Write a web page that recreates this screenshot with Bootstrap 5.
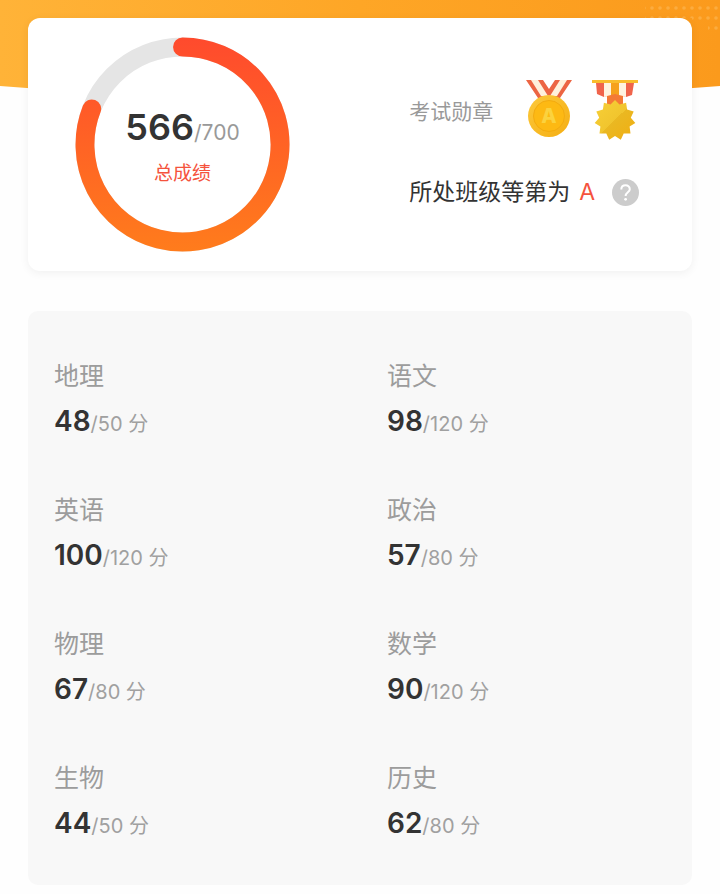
<!DOCTYPE html>
<html lang="zh-CN">
<head>
<meta charset="utf-8">
<meta name="viewport" content="width=device-width, initial-scale=1">
<title>考试成绩</title>
<link href="https://cdn.jsdelivr.net/npm/bootstrap@5.3.0/dist/css/bootstrap.min.css" rel="stylesheet">
<style>
body { font-family: Inter, "Noto Sans CJK SC", sans-serif; background: #fefefe; color: #333; }
.hero-bg { height: 96px; z-index: -1; }
.page-wrap { padding: 18px 28px 9px; }
.summary { border-radius: 12px; padding: 19px 0; display: grid; grid-template-columns: 31fr 23fr; box-shadow: 0 2px 10px rgba(0,0,0,.06); }
.ring-box { width: 215px; margin-left: 47px; display: grid; }
.ring-box > * { grid-area: 1 / 1; }
.total-num { font-size: 36px; line-height: 50px; font-weight: 600; }
.total-max { font-size: 21px; color: #999; }
.total-label { font-size: 19px; line-height: 28px; color: #f5533d; margin-top: 2px; }
.info-col { padding-top: 43px; }
.medal-label { font-size: 21px; line-height: 32px; color: #999; }
.medal-row { height: 64px; }
.medal-list { gap: 20px; margin-left: 33px; }
.grade-row { font-size: 23px; line-height: 36px; margin-top: 30px; }
.grade-mark { color: #f5533d; margin: 0 17px 0 9px; }
.help-btn { width: 27px; height: 27px; }
.subjects { background: #f8f8f8; border-radius: 10px; margin-top: 40px; padding: 47px 26px 41px; row-gap: 50px; display: grid; grid-template-columns: 333fr 279fr; }
.subj-name { font-size: 25px; line-height: 36px; font-weight: 400; color: #9c9c9c; }
.subj-score { font-size: 28px; line-height: 36px; margin-top: 9px; }
.subj-max { font-size: 20px; color: #a0a0a0; }
</style>
<script src="https://cdn.jsdelivr.net/npm/bootstrap@5.3.0/dist/js/bootstrap.bundle.min.js"></script>
</head>
<body>
<div class="position-relative">
<svg class="hero-bg position-absolute top-0 start-0 w-100" viewBox="0 0 720 96" preserveAspectRatio="none" aria-hidden="true">
  <defs>
    <linearGradient id="heroFill" x1="0" y1="0" x2="1" y2="0"><stop offset="0" stop-color="#ffb338"/><stop offset=".5" stop-color="#fea626"/><stop offset="1" stop-color="#fb9a1c"/></linearGradient>
    <pattern id="dots" width="8" height="10" patternUnits="userSpaceOnUse"><circle cx="4" cy="8" r="1.800" fill="#fdb755" fill-opacity=".6"/></pattern>
  </defs>
  <path d="M0 0H720V86Q360 116 0 86Z" fill="url(#heroFill)"/>
  <path d="M645 5H720V32H708V25H692V18H645Z" fill="url(#dots)"/>
</svg>
<main class="page-wrap">
  <section class="summary bg-white">
    <div class="ring-box">
      <svg viewBox="0 0 216 216" class="w-100" aria-hidden="true">
        <defs><linearGradient id="ringFill" gradientUnits="userSpaceOnUse" x1="0" y1="0" x2="0" y2="216"><stop offset="0" stop-color="#ff4a2d"/><stop offset="1" stop-color="#ff7c1c"/></linearGradient></defs>
        <circle cx="108" cy="108" r="98" fill="none" stroke="#e5e5e5" stroke-width="19"/>
        <path d="M108 10A98 98 0 1 1 16.800 72.200" fill="none" stroke="url(#ringFill)" stroke-width="19" stroke-linecap="round"/>
      </svg>
      <div class="d-flex flex-column align-items-center justify-content-center">
        <div class="total-num">566<span class="total-max fw-normal">/700</span></div>
        <div class="total-label">总成绩</div>
      </div>
    </div>
    <div class="info-col">
      <div class="medal-row d-flex align-items-start">
        <div class="medal-label mt-3">考试勋章</div>
        <div class="medal-list d-flex">
        <svg width="46" height="60" viewBox="0 0 46 60" role="img" aria-label="A 级奖牌">
          <defs><linearGradient id="coin" x1="0" y1="0" x2="1" y2="1"><stop offset="0" stop-color="#fcc93c"/><stop offset="1" stop-color="#f5ae12"/></linearGradient></defs>
          <path d="M0 0H17L23 9L29 0H46L34 18H12Z" fill="#ec6543"/>
          <path d="M5 0H12L22 16H15ZM41 0H34L24 16H31Z" fill="#fff1dc"/>
          <circle cx="23" cy="36" r="21" fill="url(#coin)"/><circle cx="23" cy="36" r="15.500" fill="#fdb913" stroke="#f3ab10"/>
          <text x="23" y="43" text-anchor="middle" font-size="20" font-weight="800" fill="#fbd23e">A</text>
        </svg>
        <svg width="46" height="60" viewBox="0 0 46 60" role="img" aria-label="星形奖章">
          <defs><linearGradient id="star" x1="0" y1="0" x2="1" y2="1"><stop offset="0" stop-color="#f7d038"/><stop offset=".5" stop-color="#f1c52e"/><stop offset=".5" stop-color="#eab822"/><stop offset="1" stop-color="#f0ae12"/></linearGradient></defs>
          <path d="M4 3H42L40 15L34 17L23 14L12 17L5 14Z" fill="#f0644b"/><path d="M12 3H19V16L12 17ZM27 3H34V17L27 16Z" fill="#fff3df"/><path d="M19 3H27V17H19Z" fill="#f6a11c"/>
          <path d="M15 16L23 14L31 16V28H15Z" fill="#f47a35"/><path d="M0 0H46V3H0Z" fill="#f9bd2c"/>
          <path d="M23 20L27.500 24.600L34.100 22.800L35.100 29.500L41.700 31.500L38.800 37.700L43.300 42.900L37.600 46.600L38.500 53.400L31.700 53.500L28.800 59.700L23 56L17.200 59.700L14.300 53.500L7.500 53.400L8.400 46.600L2.700 42.900L7.200 37.700L4.300 31.500L10.900 29.500L11.900 22.800L18.500 24.600Z" fill="url(#star)"/>
        </svg>
        </div>
      </div>
      <div class="grade-row d-flex align-items-center">所处班级等第为<span class="grade-mark">A</span>
        <button type="button" class="help-btn btn p-0 border-0 d-flex" aria-label="等第说明"><svg width="27" height="27" viewBox="0 0 27 27" aria-hidden="true"><circle cx="13.500" cy="13.500" r="13.500" fill="#ccc"/><path d="M9.300 10.500C9.300 5 17.800 5 17.800 10.200C17.800 13.200 13.600 13.400 13.600 17" fill="none" stroke="#fff" stroke-width="2"/><circle cx="13.600" cy="20.300" r="1.400" fill="#fff"/></svg></button>
      </div>
    </div>
  </section>
  <section class="subjects">
    <div><h2 class="subj-name m-0">地理</h2><div class="subj-score"><b class="fw-semibold">48</b><span class="subj-max">/50 分</span></div></div>
    <div><h2 class="subj-name m-0">语文</h2><div class="subj-score"><b class="fw-semibold">98</b><span class="subj-max">/120 分</span></div></div>
    <div><h2 class="subj-name m-0">英语</h2><div class="subj-score"><b class="fw-semibold">100</b><span class="subj-max">/120 分</span></div></div>
    <div><h2 class="subj-name m-0">政治</h2><div class="subj-score"><b class="fw-semibold">57</b><span class="subj-max">/80 分</span></div></div>
    <div><h2 class="subj-name m-0">物理</h2><div class="subj-score"><b class="fw-semibold">67</b><span class="subj-max">/80 分</span></div></div>
    <div><h2 class="subj-name m-0">数学</h2><div class="subj-score"><b class="fw-semibold">90</b><span class="subj-max">/120 分</span></div></div>
    <div><h2 class="subj-name m-0">生物</h2><div class="subj-score"><b class="fw-semibold">44</b><span class="subj-max">/50 分</span></div></div>
    <div><h2 class="subj-name m-0">历史</h2><div class="subj-score"><b class="fw-semibold">62</b><span class="subj-max">/80 分</span></div></div>
  </section>
</main>
</div>
</body>
</html>
